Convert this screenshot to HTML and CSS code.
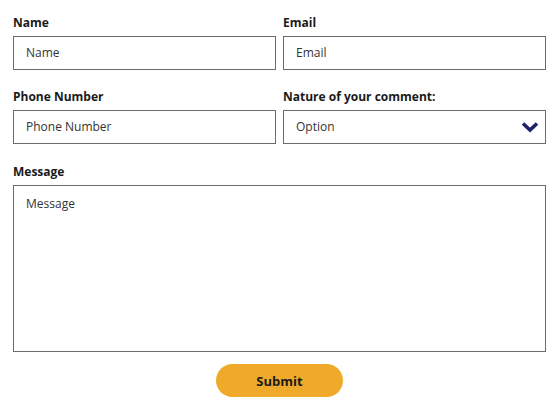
FILE: index.html
```html
<!DOCTYPE html>
<html>
<head>
<meta charset="utf-8">
<link rel="stylesheet" href="styles.css">
</head>
<body>
<form class="form">
  <div class="grid">
    <div class="field">
      <label class="label">Name</label>
      <div class="input">Name</div>
    </div>
    <div class="field">
      <label class="label">Email</label>
      <div class="input">Email</div>
    </div>
    <div class="field">
      <label class="label">Phone Number</label>
      <div class="input">Phone Number</div>
    </div>
    <div class="field">
      <label class="label">Nature of your comment:</label>
      <div class="input select">
        <span>Option</span>
        <svg class="chev" width="18" height="12" viewBox="0 0 18 12"><path d="M2 2.5 L9 9 L16 2.5" fill="none" stroke="#1c1f6b" stroke-width="3.5" stroke-linecap="butt"/></svg>
      </div>
    </div>
    <div class="field full">
      <label class="label">Message</label>
      <div class="input textarea">Message</div>
    </div>
  </div>
  <div class="actions">
    <button type="button" class="submit">Submit</button>
  </div>
</form>
</body>
</html>
```

FILE: styles.css
```css
* { box-sizing: border-box; }
html, body { margin: 0; padding: 0; background: #fff; }
body {
  font-family: "Open Sans", "Liberation Sans", sans-serif;
  color: #222;
}
.form {
  padding: 14px 12px 0 13px;
}
.grid {
  display: grid;
  grid-template-columns: 263px 263px;
  column-gap: 7px;
  row-gap: 18px;
}
.field { display: flex; flex-direction: column; }
.full { grid-column: 1 / span 2; margin-top: 1px; }
.label {
  font-size: 12px;
  font-weight: 700;
  line-height: 17px;
  height: 18px;
  margin-bottom: 4px;
  color: #1a1a1a;
}
.input {
  height: 34px;
  border: 1px solid #6b6b6b;
  padding: 0 12px;
  font-size: 12px;
  line-height: 32px;
  color: #333;
}
.select {
  display: flex;
  justify-content: space-between;
  align-items: center;
  padding-right: 6px;
}
.chev { display: block; }
.textarea {
  height: 167px;
  line-height: 16px;
  padding-top: 10px;
}
.actions {
  display: flex;
  justify-content: center;
  padding-top: 12px;
}
.submit {
  width: 127px;
  height: 33px;
  border: none;
  border-radius: 17px;
  background: #f0aa2b;
  font-family: "Open Sans", "Liberation Sans", sans-serif;
  font-weight: 700;
  font-size: 13px;
  color: #1a1a1a;
  padding: 0;
}
```
